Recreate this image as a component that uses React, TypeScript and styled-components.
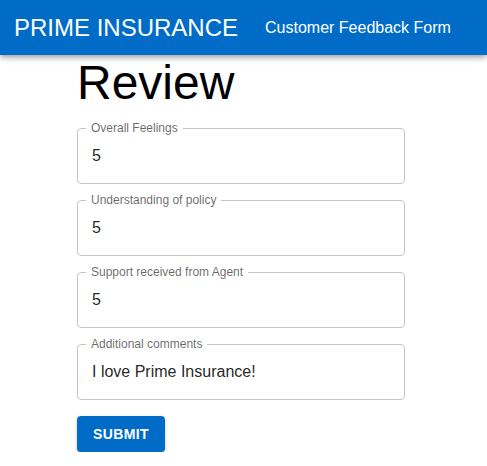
import React from 'react';
import styled, { createGlobalStyle } from 'styled-components';

const GlobalStyle = createGlobalStyle`
  body {
    margin: 0;
    background: #fff;
    font-family: "Liberation Sans", Arial, sans-serif;
  }
`;

const AppBar = styled.header`
  height: 55px;
  background: #006cc8;
  color: #fff;
  display: flex;
  align-items: center;
  padding: 0 14px;
  box-shadow: 0 2px 4px -1px rgba(0, 0, 0, 0.2), 0 4px 5px 0 rgba(0, 0, 0, 0.14),
    0 1px 10px 0 rgba(0, 0, 0, 0.12);
  position: relative;
  z-index: 1;
`;

const Brand = styled.div`
  font-size: 24px;
  font-weight: 400;
  line-height: 1;
  margin-right: 27px;
`;

const SubTitle = styled.div`
  font-size: 16px;
  line-height: 1;
`;

const Main = styled.main`
  padding-left: 77px;
  width: 328px;
`;

const Heading = styled.h1`
  margin: 0;
  font-size: 48px;
  font-weight: 400;
  line-height: 56px;
  color: #000;
`;

const Form = styled.form`
  display: flex;
  flex-direction: column;
  gap: 16px;
  padding-top: 17px;
`;

const Field = styled.div`
  position: relative;
`;

const Label = styled.label`
  position: absolute;
  top: -7px;
  left: 9px;
  padding: 0 5px;
  background: #fff;
  font-size: 12px;
  line-height: 14px;
  color: rgba(0, 0, 0, 0.6);
`;

const Input = styled.input`
  display: block;
  box-sizing: border-box;
  width: 100%;
  height: 56px;
  margin: 0;
  padding: 0 14px;
  border: 1px solid #c4c4c4;
  border-radius: 4px;
  font-family: "Liberation Sans", Arial, sans-serif;
  font-size: 16px;
  color: rgba(0, 0, 0, 0.87);
  background: transparent;
  outline: none;
`;

const SubmitButton = styled.button`
  align-self: flex-start;
  height: 36px;
  padding: 0 16px;
  border: none;
  border-radius: 4px;
  background: #006cc8;
  color: #fff;
  font-family: "Liberation Sans", Arial, sans-serif;
  font-size: 14px;
  font-weight: 700;
  letter-spacing: 0.4px;
  text-transform: uppercase;
  box-shadow: 0 3px 1px -2px rgba(0, 0, 0, 0.2), 0 2px 2px 0 rgba(0, 0, 0, 0.14),
    0 1px 5px 0 rgba(0, 0, 0, 0.12);
  cursor: pointer;
`;

const fields = [
  { id: 'overall', label: 'Overall Feelings', value: '5' },
  { id: 'policy', label: 'Understanding of policy', value: '5' },
  { id: 'agent', label: 'Support received from Agent', value: '5' },
  { id: 'comments', label: 'Additional comments', value: 'I love Prime Insurance!' },
];

const App: React.FC = () => {
  return (
    <>
      <GlobalStyle />
      <AppBar>
        <Brand>PRIME INSURANCE</Brand>
        <SubTitle>Customer Feedback Form</SubTitle>
      </AppBar>
      <Main>
        <Heading>Review</Heading>
        <Form onSubmit={(e) => e.preventDefault()}>
          {fields.map((f) => (
            <Field key={f.id}>
              <Input id={f.id} defaultValue={f.value} />
              <Label htmlFor={f.id}>{f.label}</Label>
            </Field>
          ))}
          <SubmitButton type="submit">Submit</SubmitButton>
        </Form>
      </Main>
    </>
  );
};

export default App;
